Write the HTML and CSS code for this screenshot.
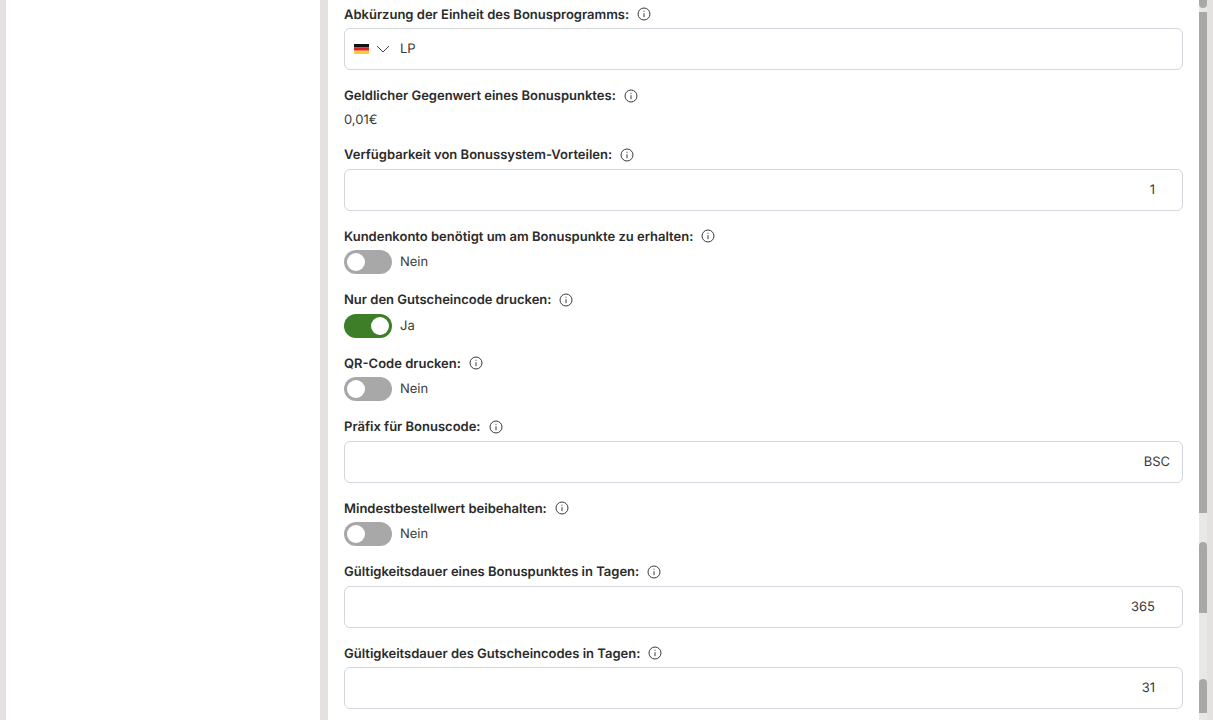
FILE: index.html
```html
<!DOCTYPE html>
<html lang="en">
<head>
    <meta charset="UTF-8">
    <meta name="viewport" content="width=device-width, initial-scale=1.0">
    <title>Bonusprogramm</title>
    <link rel="stylesheet" href="styles.css">
</head>
<body>
    <div class="layout">
        <aside class="sidebar"></aside>

        <main class="content">
            <div class="field">
                <div class="label">Abkürzung der Einheit des Bonusprogramms: <svg class="info" viewBox="0 0 14 14"><circle cx="7" cy="7" r="6"/><path d="M7 6.2v4M7 3.8v1"/></svg></div>
                <div class="input">
                    <svg class="flag" viewBox="0 0 15 10"><rect width="15" height="3.4" fill="#111"/><rect y="3.4" width="15" height="3.3" fill="#d8232a"/><rect y="6.7" width="15" height="3.3" fill="#fbce2e"/></svg>
                    <svg class="chevron" viewBox="0 0 14 8"><path d="M1 1l6 6 6-6"/></svg>
                    <span class="input-text">LP</span>
                </div>
            </div>

            <div class="field">
                <div class="label">Geldlicher Gegenwert eines Bonuspunktes: <svg class="info" viewBox="0 0 14 14"><circle cx="7" cy="7" r="6"/><path d="M7 6.2v4M7 3.8v1"/></svg></div>
                <div class="value">0,01€</div>
            </div>

            <div class="field">
                <div class="label">Verfügbarkeit von Bonussystem-Vorteilen: <svg class="info" viewBox="0 0 14 14"><circle cx="7" cy="7" r="6"/><path d="M7 6.2v4M7 3.8v1"/></svg></div>
                <div class="input number"><span class="input-text">1</span></div>
            </div>

            <div class="field">
                <div class="label">Kundenkonto benötigt um am Bonuspunkte zu erhalten: <svg class="info" viewBox="0 0 14 14"><circle cx="7" cy="7" r="6"/><path d="M7 6.2v4M7 3.8v1"/></svg></div>
                <div class="switch-row"><span class="switch"></span><span class="input-text">Nein</span></div>
            </div>

            <div class="field">
                <div class="label">Nur den Gutscheincode drucken: <svg class="info" viewBox="0 0 14 14"><circle cx="7" cy="7" r="6"/><path d="M7 6.2v4M7 3.8v1"/></svg></div>
                <div class="switch-row"><span class="switch on"></span><span class="input-text">Ja</span></div>
            </div>

            <div class="field">
                <div class="label">QR-Code drucken: <svg class="info" viewBox="0 0 14 14"><circle cx="7" cy="7" r="6"/><path d="M7 6.2v4M7 3.8v1"/></svg></div>
                <div class="switch-row"><span class="switch"></span><span class="input-text">Nein</span></div>
            </div>

            <div class="field">
                <div class="label">Präfix für Bonuscode: <svg class="info" viewBox="0 0 14 14"><circle cx="7" cy="7" r="6"/><path d="M7 6.2v4M7 3.8v1"/></svg></div>
                <div class="input text-end"><span class="input-text">BSC</span></div>
            </div>

            <div class="field">
                <div class="label">Mindestbestellwert beibehalten: <svg class="info" viewBox="0 0 14 14"><circle cx="7" cy="7" r="6"/><path d="M7 6.2v4M7 3.8v1"/></svg></div>
                <div class="switch-row"><span class="switch"></span><span class="input-text">Nein</span></div>
            </div>

            <div class="field">
                <div class="label">Gültigkeitsdauer eines Bonuspunktes in Tagen: <svg class="info" viewBox="0 0 14 14"><circle cx="7" cy="7" r="6"/><path d="M7 6.2v4M7 3.8v1"/></svg></div>
                <div class="input number"><span class="input-text">365</span></div>
            </div>

            <div class="field">
                <div class="label">Gültigkeitsdauer des Gutscheincodes in Tagen: <svg class="info" viewBox="0 0 14 14"><circle cx="7" cy="7" r="6"/><path d="M7 6.2v4M7 3.8v1"/></svg></div>
                <div class="input number"><span class="input-text">31</span></div>
            </div>
        </main>

        <div class="scrollbar">
            <span class="thumb first"></span>
            <span class="thumb second"></span>
            <span class="thumb third"></span>
            <span class="thumb fourth"></span>
        </div>
    </div>
</body>
</html>
```

FILE: styles.css
```css
html, body {
    margin: 0;
    padding: 0;
    height: 720px;
    overflow: hidden;
}

body {
    font-family: 'Inter', sans-serif;
    font-size: 13px;
    line-height: 19.5px;
    color: #3a3a3a;
    background-color: #e5e1e1;
    text-rendering: geometricPrecision;
}

.layout {
    display: flex;
    height: 720px;
    padding: 0 6px;
    box-sizing: border-box;
}

.sidebar {
    width: 314px;
    background-color: white;
    margin-right: 8px;
}

.content {
    flex: 1;
    background-color: white;
    padding: 4.5px 16px 0;
    overflow: hidden;
}

.field {
    margin-bottom: 16px;
}

.label {
    display: flex;
    align-items: flex-start;
    gap: 8px;
    height: 19.5px;
    padding-top: 1px;
    margin-bottom: 3px;
    font-weight: 600;
    color: #2b2b2b;
}

.info {
    width: 14px;
    height: 14px;
    margin-top: 1.5px;
    fill: none;
    stroke: #3a3a3a;
    stroke-width: 1;
}

.input {
    display: flex;
    align-items: center;
    height: 42px;
    box-sizing: border-box;
    padding: 0 12px 0 9px;
    border: 1px solid #d3d6dc;
    border-radius: 6px;
}

.input-text {
    padding-top: 1.6px;
}

.value {
    padding-top: 1px;
    margin-bottom: -1px;
}

.input.number {
    justify-content: flex-end;
    padding-right: 27px;
}

.input.text-end {
    justify-content: flex-end;
}

.flag {
    width: 15px;
    height: 10px;
    margin-right: 7px;
}

.chevron {
    width: 14px;
    height: 8px;
    margin-right: 10px;
    fill: none;
    stroke: #444;
    stroke-width: 1;
}

.switch-row {
    display: flex;
    align-items: center;
    gap: 8px;
    height: 24px;
}

.switch {
    display: flex;
    align-items: center;
    width: 48px;
    height: 24px;
    box-sizing: border-box;
    padding: 0 3px;
    border-radius: 12px;
    background-color: #a8a8a8;
}

.switch::before {
    content: "";
    width: 18px;
    height: 18px;
    border-radius: 50%;
    background-color: white;
}

.switch.on {
    justify-content: flex-end;
    background-color: #3c7f28;
}

.scrollbar {
    display: flex;
    flex-direction: column;
    width: 8px;
    background-color: #e8e8e8;
}

.thumb {
    display: block;
    background-color: #a8a8a8;
}

.thumb.first {
    height: 8px;
    border-radius: 0 0 4px 4px;
    margin-bottom: 4px;
}

.thumb.second {
    height: 501px;
    margin-bottom: 29px;
}

.thumb.third {
    height: 71px;
    border-radius: 4px 4px 0 0;
    margin-bottom: 66px;
}

.thumb.fourth {
    height: 34px;
    border-radius: 4px 4px 0 0;
}
```
